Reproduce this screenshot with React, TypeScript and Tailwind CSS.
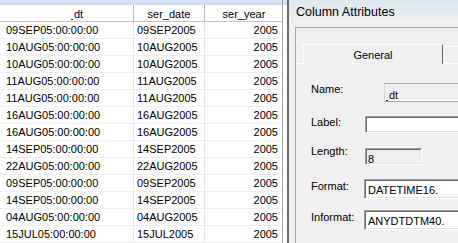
import React from "react";

const rows: [string, string][] = [
  ["09SEP05:00:00:00", "09SEP2005"],
  ["10AUG05:00:00:00", "10AUG2005"],
  ["10AUG05:00:00:00", "10AUG2005"],
  ["11AUG05:00:00:00", "11AUG2005"],
  ["11AUG05:00:00:00", "11AUG2005"],
  ["16AUG05:00:00:00", "16AUG2005"],
  ["16AUG05:00:00:00", "16AUG2005"],
  ["14SEP05:00:00:00", "14SEP2005"],
  ["22AUG05:00:00:00", "22AUG2005"],
  ["09SEP05:00:00:00", "09SEP2005"],
  ["14SEP05:00:00:00", "14SEP2005"],
  ["04AUG05:00:00:00", "04AUG2005"],
  ["15JUL05:00:00:00", "15JUL2005"],
];

const sunken =
  "border border-t-[#a0a0a0] border-l-[#a0a0a0] border-b-[#ffffff] border-r-[#ffffff] shadow-[inset_1px_1px_0_#696969,inset_-1px_-1px_0_#e3e3e3]";

function Mark() {
  return <span className="inline-block w-[2px] h-[1px] bg-[#222] align-[-2px] mr-[1px]" />;
}

export default function App() {
  return (
    <div className="w-[458px] h-[243px] overflow-hidden flex bg-white text-black text-[11px] leading-[13px] font-['Liberation_Sans',Arial,sans-serif]">
      {/* data table */}
      <div className="w-[283px] flex-none flex flex-col border-r border-[#a0a0a0]">
        <div className="h-[5px] bg-gradient-to-b from-[#dbe7f5] to-[#c8daee]" />
        <div className="h-[18px] flex border-b border-[#c4c4c4] bg-white">
          <div className="w-[134px] border-r border-[#b8b8b8] pt-[3px] pl-[71px]">
            <Mark />dt
          </div>
          <div className="w-[71px] border-r border-[#b8b8b8] pt-[3px] text-center">ser_date</div>
          <div className="flex-1 pt-[3px] text-center pl-[1px]">ser_year</div>
        </div>
        {rows.map((r, i) => (
          <div key={i} className="h-[17px] flex-none flex border-b border-[#eeeeee]">
            <div className="w-[134px] border-r border-[#e6e6e6] pt-[2px] pl-[6px]">{r[0]}</div>
            <div className="w-[71px] border-r border-[#e6e6e6] pt-[2px] pl-[3px]">{r[1]}</div>
            <div className="flex-1 pt-[2px] pr-[4px] text-right">2005</div>
          </div>
        ))}
      </div>
      <div className="w-[4px] flex-none flex flex-col">
        <div className="h-[5px] bg-gradient-to-b from-[#dbe7f5] to-[#c8daee]" />
        <div className="flex-1 bg-white" />
      </div>

      {/* dialog */}
      <div className="flex-1 flex flex-col border-l-2 border-[#6a6a6a] bg-gradient-to-b from-[#dfe8f3] via-[#f0f0f0] via-[10%] to-[#f0f0f0]">
        <div className="h-[27px] flex-none pt-[5px] pl-[7px] text-[12.5px] leading-[15px] whitespace-nowrap">
          Column Attributes
        </div>
        <div className="flex-1 ml-[6px] border-l border-t border-[#a6a6a6] bg-[#f0f0f0] flex flex-col">
          {/* tabs */}
          <div className="mt-[16px] h-[20px] flex-none flex">
            <div className="w-[7px] border-b border-white" />
            <div className="w-[140px] flex-none border-t border-l border-[#fcfcfc] border-r border-r-[#696969] pt-[4px] text-center">
              General
            </div>
            <div className="flex-1 mt-[2px] border-t border-b border-white" />
          </div>
          {/* fields */}
          <div className="flex flex-col pl-[15px] whitespace-nowrap">
            <div className="mt-[19px] h-[19px] flex">
              <span className="w-[73px] flex-none">Name:</span>
              <div className="w-[120px] flex-none bg-[#f0f0f0] border-t border-b border-t-[#a9a9a9] border-b-[#a9a9a9] border-l border-l-[#d6d6d6] shadow-[inset_0_-1px_0_#ffffff] pt-[5px] pl-[1px]">
                <Mark />dt
              </div>
            </div>
            <div className="mt-[14px] h-[17px] flex">
              <span className="w-[54px] flex-none">Label:</span>
              <div className={`w-[140px] flex-none bg-white ${sunken}`} />
            </div>
            <div className="mt-[15px] h-[17px] flex">
              <span className="w-[54px] flex-none -mt-[3px]">Length:</span>
              <div className={`w-[57px] flex-none bg-[#f0f0f0] ${sunken} pt-[4px] pl-[2px] overflow-hidden`}>8</div>
            </div>
            <div className="mt-[14px] h-[20px] flex">
              <span className="w-[53px] flex-none mt-[1px]">Format:</span>
              <div className={`w-[140px] flex-none bg-white ${sunken} pt-[4px] pl-[3px]`}>DATETIME16.</div>
            </div>
            <div className="mt-[11px] h-[20px] flex">
              <span className="w-[53px] flex-none mt-[1px]">Informat:</span>
              <div className={`w-[140px] flex-none bg-white ${sunken} pt-[4px] pl-[3px]`}>ANYDTDTM40.</div>
            </div>
          </div>
        </div>
      </div>
    </div>
  );
}
